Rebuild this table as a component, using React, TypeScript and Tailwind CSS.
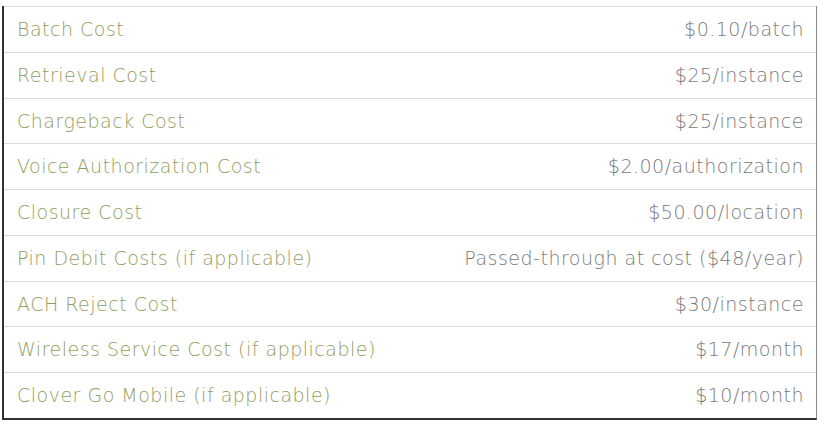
import React from "react";

const rows: [string, string][] = [
  ["Batch Cost", "$0.10/batch"],
  ["Retrieval Cost", "$25/instance"],
  ["Chargeback Cost", "$25/instance"],
  ["Voice Authorization Cost", "$2.00/authorization"],
  ["Closure Cost", "$50.00/location"],
  ["Pin Debit Costs (if applicable)", "Passed-through at cost ($48/year)"],
  ["ACH Reject Cost", "$30/instance"],
  ["Wireless Service Cost (if applicable)", "$17/month"],
  ["Clover Go Mobile (if applicable)", "$10/month"],
];

export default function App() {
  return (
    <div className="w-[824px] h-[424px] bg-white pt-[6px] pl-[2px]" style={{ fontFamily: '"DejaVu Sans", sans-serif' }}>
      <div className="w-[815px] border-l-2 border-b-2 border-r border-l-[#333] border-b-[#333] border-r-[#888]">
        {rows.map(([k, v]) => (
          <div key={k} className="h-[45.75px] border-t border-[#dcdcdc] flex items-center justify-between pl-[13px] pr-[12px] text-[19px] tracking-[0.5px] font-extralight">
            <span className="text-[#939d62]">{k}</span>
            <span className="text-[#7a7a7a]">{v}</span>
          </div>
        ))}
      </div>
    </div>
  );
}
